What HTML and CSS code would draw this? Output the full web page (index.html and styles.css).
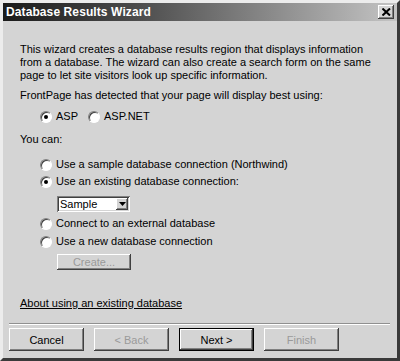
FILE: index.html
```html
<!DOCTYPE html>
<html>
<head>
<meta charset="utf-8">
<link rel="stylesheet" href="styles.css">
</head>
<body>
<div class="window">
  <div class="titlebar">
    <span class="title">Database Results Wizard</span>
    <span class="close"><svg width="9" height="8" viewBox="0 0 9 8"><path d="M0.5 0.5 L8 7.5 M8 0.5 L0.5 7.5" stroke="#000" stroke-width="2"/></svg></span>
  </div>
  <div class="content">
    <p class="intro">This wizard creates a database results region that displays information from a database. The wizard can also create a search form on the same page to let site visitors look up specific information.</p>
    <p class="detected">FrontPage has detected that your page will display best using:</p>
    <div class="asp-row">
      <label class="opt"><span class="radio checked"></span>ASP</label>
      <label class="opt"><span class="radio"></span>ASP.NET</label>
    </div>
    <p class="youcan">You can:</p>
    <div class="choices">
      <label class="opt"><span class="radio"></span>Use a sample database connection (Northwind)</label>
      <label class="opt opt2"><span class="radio checked"></span>Use an existing database connection:</label>
      <div class="select"><span class="select-text">Sample</span><span class="select-btn"><svg width="7" height="4" viewBox="0 0 7 4"><path d="M0 0 H7 L3.5 4 Z" fill="#000"/></svg></span></div>
      <label class="opt opt3"><span class="radio"></span>Connect to an external database</label>
      <label class="opt opt4"><span class="radio"></span>Use a new database connection</label>
      <div class="btn small disabled">Create...</div>
    </div>
    <a class="link">About using an existing database</a>
  </div>
  <div class="separator"></div>
  <div class="buttons">
    <div class="btn">Cancel</div>
    <div class="btn disabled">&lt; Back</div>
    <div class="btn default">Next &gt;</div>
    <div class="btn disabled">Finish</div>
  </div>
</div>
</body>
</html>
```
FILE: styles.css
```css
html, body {
  margin: 0;
  padding: 0;
  background: #d4d4d4;
}
.window {
  width: 400px;
  height: 361px;
  box-sizing: border-box;
  background: #d4d4d4;
  border-top: 3px solid #ececec;
  border-left: 3px solid #ececec;
  border-right: 3px solid #3a3a3a;
  border-bottom: 3px solid #3a3a3a;
  font-family: "Liberation Sans", Arial, sans-serif;
  font-size: 11px;
  color: #000;
  display: flex;
  flex-direction: column;
}
.titlebar {
  height: 18px;
  background: linear-gradient(to right, #1a1a1a 0%, #4e4e4e 35%, #c4c4c4 100%);
  display: flex;
  align-items: center;
  justify-content: space-between;
  padding: 0 3px 0 3px;
}
.title {
  color: #fff;
  font-weight: bold;
  font-size: 12px;
  letter-spacing: 0.1px;
}
.close {
  width: 16px;
  height: 14px;
  box-sizing: border-box;
  background: #d4d4d4;
  box-shadow: inset -1px -1px #404040, inset 1px 1px #fff, inset -2px -2px #808080;
  display: flex;
  align-items: center;
  justify-content: center;
}
.content {
  padding: 22px 0 0 17px;
  line-height: 13px;
  flex: 1;
}
p {
  margin: 0;
}
.intro {
  width: 368px;
}
.detected {
  margin-top: 7px;
}
.asp-row {
  display: flex;
  gap: 10px;
  margin-top: 8px;
  padding-left: 20px;
}
.youcan {
  margin-top: 10px;
}
.choices {
  display: flex;
  flex-direction: column;
  align-items: flex-start;
  padding-left: 20px;
  margin-top: 12px;
}
.opt {
  display: flex;
  align-items: center;
  gap: 4px;
  height: 13px;
}
.opt2 { margin-top: 4px; }
.opt3 { margin-top: 5px; }
.opt4 { margin-top: 5px; }
.radio {
  width: 12px;
  height: 12px;
  border-radius: 50%;
  box-sizing: border-box;
  background: #fff;
  border: 1px solid;
  border-color: #808080 #fff #fff #808080;
  box-shadow: inset 1px 1px #404040;
  position: relative;
}
.radio.checked::after {
  content: "";
  position: absolute;
  left: 3px;
  top: 3px;
  width: 4px;
  height: 4px;
  border-radius: 50%;
  background: #000;
}
.select {
  margin: 8px 0 0 17px;
  width: 73px;
  height: 16px;
  box-sizing: border-box;
  background: #fff;
  box-shadow: inset 1px 1px #808080, inset -1px -1px #fff, inset 2px 2px #404040, inset -2px -2px #d4d4d4;
  display: flex;
  align-items: center;
  justify-content: space-between;
  padding: 2px;
}
.select-text {
  padding-left: 1px;
}
.select-btn {
  width: 12px;
  height: 12px;
  box-sizing: border-box;
  background: #d4d4d4;
  box-shadow: inset -1px -1px #404040, inset 1px 1px #fff, inset -2px -2px #808080;
  display: flex;
  align-items: center;
  justify-content: center;
}
.btn {
  width: 75px;
  height: 23px;
  box-sizing: border-box;
  background: #d4d4d4;
  box-shadow: inset -1px -1px #404040, inset 1px 1px #fff, inset -2px -2px #808080;
  display: flex;
  align-items: center;
  justify-content: center;
}
.btn.small {
  width: 74px;
  height: 16px;
  margin: 6px 0 0 17px;
}
.btn.disabled {
  color: #9a9a9a;
}
.btn.default {
  box-shadow: inset 0 0 0 1px #000, inset -2px -2px #404040, inset 2px 2px #fff, inset -3px -3px #808080;
}
.link {
  display: block;
  margin-top: 27px;
  text-decoration: underline;
  color: #000;
}
.separator {
  margin: 0 7px 0 6px;
  height: 0;
  border-top: 1px solid #909090;
  border-bottom: 1px solid #fff;
}
.buttons {
  display: flex;
  gap: 10px;
  padding: 3px 0 7px 6px;
}
```
